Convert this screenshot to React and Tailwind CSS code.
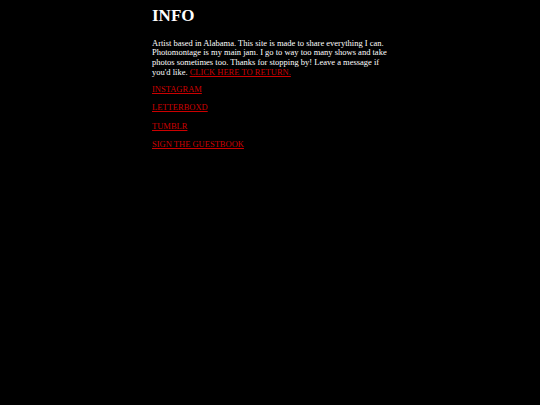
const LINKS = ['INSTAGRAM', 'LETTERBOXD', 'TUMBLR', 'SIGN THE GUESTBOOK']

export default function App() {
  return (
    <div className="min-h-[405px] bg-black text-white font-['Liberation_Serif',serif]">
      <div className="w-[240px] mx-auto pl-[2px] pt-[6px] text-[8.5px] leading-[9.8px]">
        <h1 className="text-[17px] font-bold leading-[19.5px] mb-[13px]">INFO</h1>
        <p className="mb-[7.5px]">
          Artist based in Alabama. This site is made to share everything I can.
          Photomontage is my main jam. I go to way too many shows and take
          photos sometimes too. Thanks for stopping by! Leave a message if
          you'd like.{' '}
          <a href="#" className="text-[#cc0000] underline">
            CLICK HERE TO RETURN.
          </a>
        </p>
        {LINKS.map((l) => (
          <p key={l} className="mb-[8.4px]">
            <a href="#" className="text-[#cc0000] underline">
              {l}
            </a>
          </p>
        ))}
      </div>
    </div>
  )
}
